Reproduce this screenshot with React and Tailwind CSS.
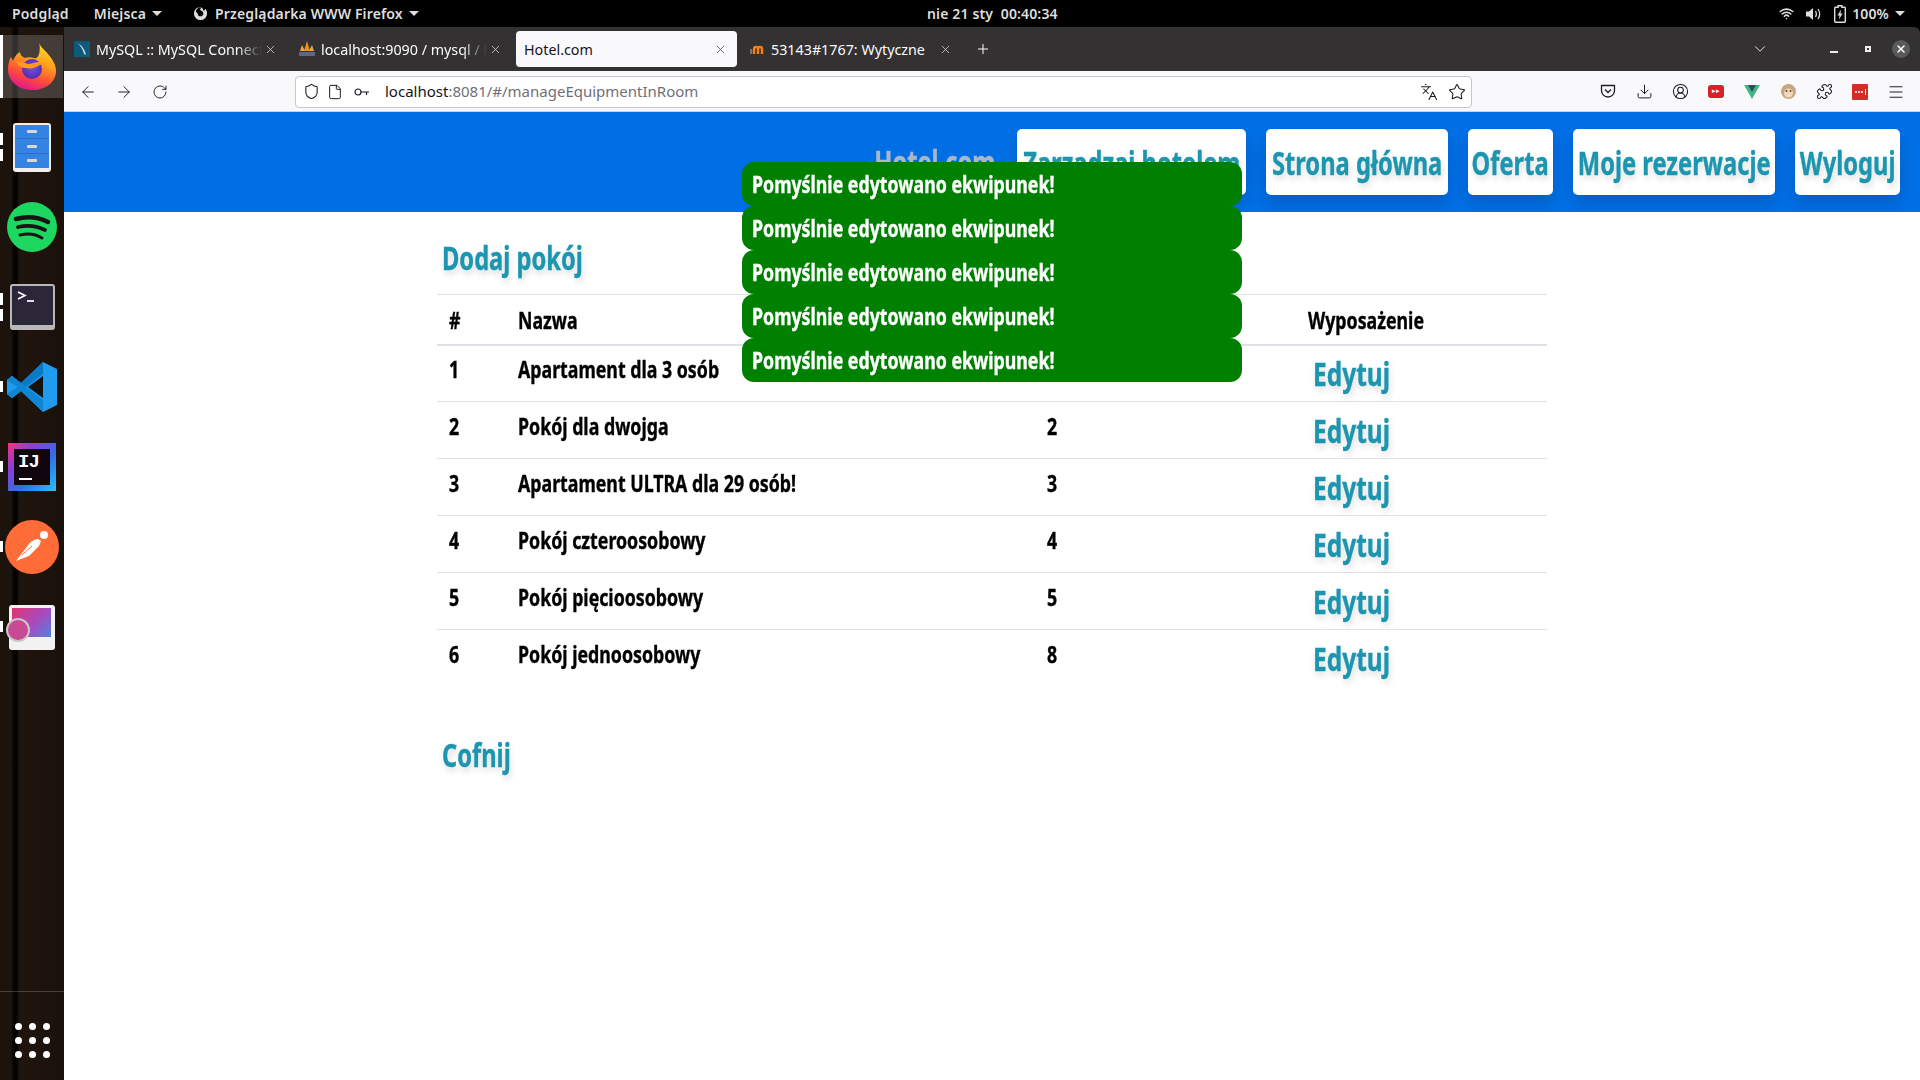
import React from "react";
import { ArrowLeft, ArrowRight, RotateCw, Languages, Star, Download, CircleUserRound, Puzzle, Menu, X, Plus, ChevronDown, Wifi, Shield, File } from "lucide-react";

const Caret = () => <span className="inline-block ml-[6px] w-0 h-0 border-x-[5px] border-x-transparent border-t-[5px] border-t-[#dedede]" />;

function FirefoxLogo({ size = 48 }) {
  return (
    <svg width={size} height={size} viewBox="0 0 48 48" className="-mt-[3px]">
      <defs>
        <linearGradient id="ffa" x1="0.75" y1="0" x2="0.35" y2="1">
          <stop offset="0" stopColor="#ffe226" />
          <stop offset="0.4" stopColor="#ffa01f" />
          <stop offset="0.72" stopColor="#ff4a3a" />
          <stop offset="1" stopColor="#e3168f" />
        </linearGradient>
        <radialGradient id="ffb" cx="0.5" cy="0.45" r="0.6">
          <stop offset="0" stopColor="#7b4fd8" />
          <stop offset="1" stopColor="#4a2bb0" />
        </radialGradient>
      </defs>
      <path d="M31 0c1 5 5 7 9 12 5 6 8 11 8 17 0 11-10 19-24 19S0 39 0 27c0-4 1-9 3-12l2 4c1-3 3-7 7-9 0 3 2 5 5 6 3-1 6-1 9 0 5 2 7-8 5-16z" fill="url(#ffa)" />
      <circle cx="24" cy="27" r="10" fill="url(#ffb)" />
      <path d="M9 20c3-1 8 1 11 2 6 0 11-5 18 1-4-1-6 0-8 1-3 2-8 3-12 2-4 0-8-2-9-6z" fill="#ff9a1f" />
    </svg>
  );
}

function FilesIcon() {
  return (
    <div className="w-[38px] h-[49px] rounded-[3px] bg-[#3584e4] border-2 border-[#eeeeee] border-b-[4px] flex flex-col">
      {[0, 1, 2].map((i) => (
        <div key={i} className="flex-1 flex items-center justify-center border-b border-[#2a6fc4] last:border-b-0">
          <div className="w-[10px] h-[3px] rounded-[1px] bg-[#d8d8d8]" />
        </div>
      ))}
    </div>
  );
}

function Spotify() {
  return (
    <svg width="50" height="50" viewBox="0 0 50 50">
      <circle cx="25" cy="25" r="25" fill="#1ed760" />
      <g fill="none" stroke="#191414" strokeLinecap="round">
        <path d="M9 17c11-3 22-2 32 3" strokeWidth="4.5" />
        <path d="M11 25c9-2 19-1 27 3" strokeWidth="3.8" />
        <path d="M13 33c8-2 16-1 22 3" strokeWidth="3" />
      </g>
    </svg>
  );
}

function Terminal() {
  return (
    <div className="w-[45px] h-[46px] rounded-[3px] bg-[#2b2638] border-2 border-[#b8b8b8] border-b-[5px] relative">
      <svg width="41" height="39" viewBox="0 0 41 39" className="absolute left-0 top-0">
        <path d="M6 6l7 3.500-7 3.500" fill="none" stroke="#fff" strokeWidth="1.7" />
        <path d="M15 15h7" stroke="#fff" strokeWidth="1.7" />
      </svg>
    </div>
  );
}

function VSCode() {
  return (
    <svg width="50" height="50" viewBox="0 0 50 50">
      <path d="M36 0l14 7v36l-14 7-22-21-9 7-5-4V18l5-4 9 7z" fill="#1f9cf0" />
      <path d="M36 0v12L5 36l-5-4 11-7L0 18l5-4 9 7z" fill="#0a7ac6" />
      <path d="M36 50V38L5 14l-5 4 11 7-11 7 5 4 9-7z" fill="#0f86d4" />
      <path d="M36 14v22L21 25z" fill="#15110d" />
    </svg>
  );
}

function IJ() {
  return (
    <svg width="48" height="48" viewBox="0 0 48 48">
      <defs>
        <linearGradient id="ija" x1="0" y1="0" x2="1" y2="1">
          <stop offset="0" stopColor="#ff2f7e" />
          <stop offset="0.3" stopColor="#8b3ed6" />
          <stop offset="0.6" stopColor="#2f6fe8" />
          <stop offset="1" stopColor="#27c3f5" />
        </linearGradient>
      </defs>
      <rect width="48" height="48" fill="url(#ija)" />
      <rect x="6" y="6" width="36" height="36" fill="#10060f" />
      <rect x="11" y="35" width="13" height="2" fill="#fff" />
      <text x="10" y="24" fill="#fff" fontSize="19" fontWeight="700" fontFamily="'Liberation Mono', monospace" letterSpacing="-1">IJ</text>
    </svg>
  );
}

function Postman() {
  return (
    <svg width="54" height="54" viewBox="0 0 54 54">
      <circle cx="27" cy="27" r="27" fill="#ff6c37" />
      <path d="M11 41l3-4 10-13c2-3 6-5 9-5l3 2-2 5-10 10-8 3-5 2z" fill="#fff" />
      <path d="M17 35l10-9" stroke="#ff6c37" strokeWidth="1" />
      <circle cx="39" cy="15" r="4" fill="#fff" />
    </svg>
  );
}

function Peek() {
  return (
    <div className="w-[46px] h-[45px] relative rounded-[3px] bg-[#f2f2f2]">
      <div className="absolute left-[3px] top-[3px] w-[39px] h-[29px] bg-[linear-gradient(135deg,#e0356f,#a84bc0_55%,#4f82dc)]" />
      <div className="absolute -left-[3px] top-[13px] w-[24px] h-[24px] rounded-full bg-[#c94a94] border-2 border-[#c8c8c8]" />
    </div>
  );
}

function Dock({ icon, marks = 0, active }) {
  return (
    <div className="h-[80px] relative flex items-center justify-center">
      {active && <div className="absolute left-[3px] right-[1px] top-[8px] bottom-[9px] bg-[#ffffff2e]" />}
      {marks === 1 && <div className={"absolute left-0 w-[3px] bg-white " + (active ? "top-[8px] h-[63px]" : "top-[34px] h-[11px]")} />}
      {marks === 2 && (
        <>
          <div className="absolute left-0 top-[26px] w-[3px] h-[12px] bg-white" />
          <div className="absolute left-0 top-[42px] w-[3px] h-[12px] bg-white" />
        </>
      )}
      <div className="relative">{icon}</div>
    </div>
  );
}

function Sidebar() {
  return (
    <div className="w-[64px] shrink-0 h-full flex flex-col bg-[linear-gradient(90deg,#1d130d_0,#1d130d_11px,#050302_14px,#050302_17px,#20150e_19px,#1a110b_100%)]">
      <Dock active marks={1} icon={<FirefoxLogo size={48} />} />
      <Dock marks={2} icon={<FilesIcon />} />
      <Dock icon={<Spotify />} />
      <Dock marks={2} icon={<Terminal />} />
      <Dock marks={1} icon={<VSCode />} />
      <Dock marks={1} icon={<IJ />} />
      <Dock marks={1} icon={<Postman />} />
      <Dock marks={1} icon={<Peek />} />
      <div className="mt-auto h-[89px] border-t border-[#ffffff30] flex items-start justify-center pt-[31px]">
        <div className="grid grid-cols-3 gap-x-[7px] gap-y-[7px]">
          {Array.from({ length: 9 }).map((_, i) => (
            <div key={i} className="w-[7px] h-[7px] rounded-full bg-white" />
          ))}
        </div>
      </div>
    </div>
  );
}

function TopBar() {
  return (
    <div className="h-[27px] bg-black text-[#dedede] text-[14px] tracking-[0.15px] font-semibold font-['Noto_Sans',sans-serif] flex items-center relative shrink-0">
      <span className="ml-[12px]">Podgląd</span>
      <span className="ml-[25px] flex items-center">Miejsca<Caret /></span>
      <span className="ml-[31px] flex items-center">
        <svg width="15" height="15" viewBox="0 0 16 16"><path d="M8 1a7 7 0 1 0 7 7c0-2-1-4-2-5 0 1-1 2-2 2 0-2-1-3-3-4 1 2 0 3-2 3 2 0 5 2 5 4a3 3 0 0 1-6 0l-2-2c0-2 2-4 5-5z" fill="#dedede" /></svg>
        <span className="ml-[7px]">Przeglądarka WWW Firefox</span><Caret />
      </span>
      <span className="absolute left-[927px] whitespace-pre">nie 21 sty  00:40:34</span>
      <div className="ml-auto flex items-center pr-[15px]">
        <Wifi size={15} strokeWidth={2.5} className="-mr-[2px]" />
        <svg width="17" height="16" viewBox="0 0 17 16" className="ml-[13px]"><path d="M1 5.500h3L8 2v12l-4-3.500H1z" fill="#dedede"/><path d="M10.500 5c1 1.800 1 4.200 0 6M13 3c2 3 2 7 0 10" fill="none" stroke="#dedede" strokeWidth="1.300"/></svg>
        <svg width="12" height="18" viewBox="0 0 12 18" className="ml-[12px]"><path d="M4 0.800h4v1.500h2.500a.8.8 0 0 1 .8.8V16.500a.8.8 0 0 1-.8.8h-9a.8.8 0 0 1-.8-.8V3.100a.8.8 0 0 1 .8-.8H4z" fill="none" stroke="#dedede" strokeWidth="1.400"/><path d="M7 4.500L3.500 10.500h2L5 14.500l3.500-6h-2z" fill="#dedede"/></svg>
        <span className="ml-[6px]">100%</span>
        <Caret />
      </div>
    </div>
  );
}

function Tab({ fav, title, fade }) {
  return (
    <div className="w-[225px] shrink-0 pr-[4px] h-full py-[4px]">
      <div className="h-full rounded-[4px] flex items-center pl-[8px] text-[#fbfbfe]">
        <div className="w-[16px] h-[16px] mr-[6px] shrink-0 flex items-center justify-center">{fav}</div>
        <div className={"w-[166px] overflow-hidden whitespace-nowrap text-[14.3px] pt-[1px] " + (fade ? "[mask-image:linear-gradient(90deg,#000_85%,transparent)]" : "")}>{title}</div>
        <X size={13} strokeWidth={1.3} className="ml-auto mr-[10px] shrink-0 text-[#e8e8e8]" />
      </div>
    </div>
  );
}

function Tabs() {
  const mysql = <svg width="16" height="16" viewBox="0 0 16 16"><rect width="16" height="16" fill="#0e5a7a" /><path d="M3 2c3 2 6 6 7 11l2 1c-1-5-4-10-9-12z" fill="#c9dde8" /></svg>;
  const pma = <svg width="16" height="16" viewBox="0 0 16 16"><path d="M8 0l3 10H5z" fill="#f29111" /><path d="M3 4l3 6H1zM13 4l2 6h-5z" fill="#f2a93b" /><rect x="0" y="11" width="16" height="4" fill="#5a6a86" /></svg>;
  const moodle = <svg width="16" height="16" viewBox="0 0 16 16"><path d="M5 13V8a2 2 0 0 1 4 0v5M9 8a2 2 0 0 1 4 0v5" stroke="#f98012" strokeWidth="2.4" fill="none" /><path d="M2 13V8" stroke="#777" strokeWidth="2" /></svg>;
  return (
    <div className="h-[44px] bg-[#333132] flex items-center pl-[2px] rounded-tr-[6px] shrink-0 font-['Noto_Sans',sans-serif]">
      <Tab fav={mysql} title="MySQL :: MySQL Connector/J" fade />
      <Tab fav={pma} title="localhost:9090 / mysql / hotel" fade />
      <div className="w-[225px] shrink-0 pr-[4px] h-full py-[4px]">
        <div className="h-full rounded-[4px] flex items-center pl-[8px] bg-[#f9f9fb] text-[#15141a]">
          <span className="text-[14.3px] pt-[1px]">Hotel.com</span>
          <X size={13} strokeWidth={1.3} className="ml-auto mr-[10px] text-[#333]" />
        </div>
      </div>
      <Tab fav={moodle} title="53143#1767: Wytyczne" />
      <Plus size={16} strokeWidth={1.5} className="text-[#fbfbfe] ml-[9px]" />
      <ChevronDown size={18} strokeWidth={1.3} className="text-[#e8e8e8] ml-[760px]" />
      <div className="w-[8px] h-[2px] bg-[#eee] ml-[61px] mt-[6px]" />
      <div className="w-[6px] h-[6px] border-2 border-[#eee] ml-[27px]" />
      <div className="w-[18px] h-[18px] rounded-full bg-[#5a5a5a] flex items-center justify-center ml-[21px]"><X size={12} strokeWidth={3} className="text-white" /></div>
    </div>
  );
}

function Toolbar() {
  const c = "text-[#1c1b22]";
  return (
    <div className="h-[41px] bg-[#f9f9fb] border-b border-[#cfcfd8] flex items-center shrink-0 font-['Noto_Sans',sans-serif] pt-[1px]">
      <ArrowLeft size={18} strokeWidth={1.3} className={"ml-[15px] " + c} />
      <ArrowRight size={18} strokeWidth={1.3} className={"ml-[18px] " + c} />
      <RotateCw size={16} strokeWidth={1.4} className={"ml-[19px] " + c} />
      <div className="w-[1177px] shrink-0 h-[32px] bg-white border border-[#c6c6cc] rounded-[4px] flex items-center ml-[127px]">
        <Shield size={17} strokeWidth={1.5} className={"ml-[7px] " + c} />
        <File size={16} strokeWidth={1.5} className={"ml-[7px] " + c} />
        <svg width="16" height="10" viewBox="0 0 16 10" className="ml-[11px]"><circle cx="4" cy="5" r="3" fill="none" stroke="#1c1b22" strokeWidth="1.2"/><path d="M7 5h8M12.500 5v3" fill="none" stroke="#1c1b22" strokeWidth="1.2"/></svg>
        <span className="ml-[11px] text-[15px] text-[#15141a] pl-[4px]">localhost<span className="text-[#6f6f78]">:8081/#/manageEquipmentInRoom</span></span>
        <Languages size={18} strokeWidth={1.4} className={"ml-auto " + c} />
        <Star size={18} strokeWidth={1.4} className={"ml-[10px] mr-[5px] " + c} />
      </div>
      <div className="w-[36px] flex justify-center ml-[118px]">
        <svg width="16" height="15" viewBox="0 0 16 15"><path d="M1.500 1.500h13v5a6.500 6.500 0 0 1-13 0z" fill="none" stroke="#1c1b22" strokeWidth="1.3" strokeLinejoin="round"/><path d="M5 5.500l3 3 3-3" fill="none" stroke="#1c1b22" strokeWidth="1.3"/></svg>
      </div>
      <div className="w-[36px] flex justify-center"><Download size={17} strokeWidth={1.4} className={c} /></div>
      <div className="w-[36px] flex justify-center"><CircleUserRound size={17} strokeWidth={1.5} className={c} /></div>
      <div className="w-[36px] flex justify-center"><div className="w-[16px] h-[13px] rounded-[3px] bg-[#d8202a] flex items-center justify-center text-white text-[7px]">▸▸</div></div>
      <div className="w-[36px] flex justify-center"><svg width="16" height="14" viewBox="0 0 16 14"><path d="M0 0h16L8 14z" fill="#41b883" /><path d="M4 0h8L8 7z" fill="#35495e" /></svg></div>
      <div className="w-[36px] flex justify-center"><svg width="17" height="17" viewBox="0 0 17 17"><circle cx="8.500" cy="8.500" r="7.500" fill="#c9a57c" /><circle cx="8.500" cy="10" r="4.500" fill="#ecd9bf" /><circle cx="6.500" cy="8" r="1" fill="#6a4a2a" /><circle cx="10.500" cy="8" r="1" fill="#6a4a2a" /></svg></div>
      <div className="w-[36px] flex justify-center"><Puzzle size={17} strokeWidth={1.5} className={c} /></div>
      <div className="w-[36px] flex justify-center"><div className="w-[16px] h-[16px] rounded-[1px] bg-[#d32d27] flex items-center justify-center gap-[1px]">{[0,1,2].map(i=><div key={i} className="w-[2px] h-[2px] rounded-full bg-white"/>)}<div className="w-[1px] h-[6px] bg-white ml-[1px]"/></div></div>
      <div className="w-[36px] flex justify-center"><Menu size={18} strokeWidth={1.3} className={c} /></div>
    </div>
  );
}

const F = "font-['Noto_Sans',sans-serif] font-bold [-webkit-text-stroke:0.4px_currentColor]";

// The web font of the page is a condensed one: the nearest installed face is narrowed.
const N = ({ children }) => <span className="inline-block origin-left scale-x-[0.74] whitespace-nowrap">{children}</span>;
const NC = ({ children }) => <span className="inline-block shrink-0 origin-center scale-x-[0.74] whitespace-nowrap">{children}</span>;

function NavBtn({ w, children }) {
  return <div className={"h-[66px] bg-white rounded-[5px] flex items-center justify-center pt-[2px] text-[32px] text-[#1b95b0] shadow-[0_8px_16px_#00000026] [text-shadow:2px_4px_8px_#00000026] " + w}><NC>{children}</NC></div>;
}

const rows = [
  ["1", "Apartament dla 3 osób", "1"],
  ["2", "Pokój dla dwojga", "2"],
  ["3", "Apartament ULTRA dla 29 osób!", "3"],
  ["4", "Pokój czteroosobowy", "4"],
  ["5", "Pokój pięcioosobowy", "5"],
  ["6", "Pokój jednoosobowy", "8"],
];

function Page() {
  return (
    <div className={"flex-1 relative bg-white " + F}>
      <div className="h-[100px] bg-[#006fe6] flex items-center justify-end gap-[20px] pr-[20px]">
        <div className="w-[124px] flex justify-center text-[32px] text-[#a9b8c9]"><NC>Hotel.com</NC></div>
        <NavBtn w="w-[229px]">Zarządzaj hotelem</NavBtn>
        <NavBtn w="w-[182px]">Strona główna</NavBtn>
        <NavBtn w="w-[85px]">Oferta</NavBtn>
        <NavBtn w="w-[202px]">Moje rezerwacje</NavBtn>
        <NavBtn w="w-[105px]">Wyloguj</NavBtn>
      </div>
      <div className="w-[1110px] ml-[373px]">
        <div className="h-[82px] flex items-center pl-[5px] pt-[10px] text-[32px] text-[#1b95b0] [text-shadow:2px_4px_8px_#00000026]"><N>Dodaj pokój</N></div>
        <table className="w-full table-fixed text-[24px] text-black">
          <thead>
            <tr className="h-[50px] border-t border-b-2 border-[#dee2e6]">
              <th className="w-[69px] text-left pl-[12px] font-bold pt-[2px]"><N>#</N></th>
              <th className="w-[529px] text-left pl-[12px] font-bold pt-[2px]"><N>Nazwa</N></th>
              <th className="w-[261px] text-left pl-[12px] font-bold pt-[2px]"><N>Numer</N></th>
              <th className="text-left pl-[12px] font-bold pt-[2px]"><N>Wyposażenie</N></th>
            </tr>
          </thead>
          <tbody>
            {rows.map((r, i) => (
              <tr key={r[0]} className={"h-[57px] " + (i < 5 ? "border-b border-[#dee2e6]" : "")}>
                <td className="pl-[12px] pb-[8px]"><N>{r[0]}</N></td>
                <td className="pl-[12px] pb-[8px]"><N>{r[1]}</N></td>
                <td className="pl-[12px] pb-[8px]"><N>{r[2]}</N></td>
                <td className="pl-[17px] pt-[2px] text-[32px] text-[#1b95b0] [text-shadow:2px_4px_8px_#00000026]"><span className="inline-block origin-left scale-x-[0.765] whitespace-nowrap">Edytuj</span></td>
              </tr>
            ))}
          </tbody>
        </table>
        <div className="mt-[44px] pl-[5px] text-[32px] text-[#1b95b0] [text-shadow:2px_4px_8px_#00000026]"><N>Cofnij</N></div>
      </div>
      <div className="absolute left-[678px] top-[50px] w-[500px] flex flex-col text-[24px] text-white">
        {[0, 1, 2, 3, 4].map((i) => (
          <div key={i} className="h-[44px] bg-[#008000] rounded-[12px] pl-[10px] flex items-center"><N>Pomyślnie edytowano ekwipunek!</N></div>
        ))}
      </div>
    </div>
  );
}

export default function App() {
  return (
    <div className="w-[1920px] h-[1080px] overflow-hidden flex flex-col bg-black">
      <TopBar />
      <div className="flex-1 flex min-h-0">
        <Sidebar />
        <div className="flex-1 flex flex-col min-w-0">
          <Tabs />
          <Toolbar />
          <Page />
        </div>
      </div>
    </div>
  );
}
